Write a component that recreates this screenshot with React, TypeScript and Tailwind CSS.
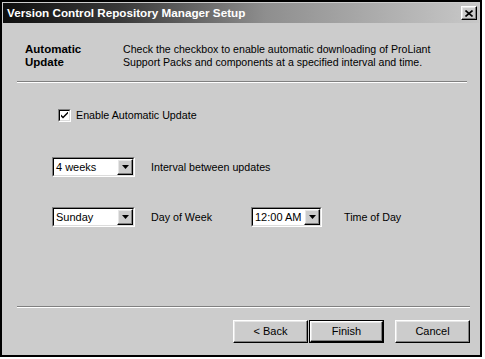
import React from 'react';

const raised =
  'border border-t-white border-l-white border-r-black border-b-black shadow-[inset_-1px_-1px_#808080,inset_1px_1px_#e6e6e6]';

function DropArrow() {
  return (
    <svg width="7" height="4" viewBox="0 0 7 4">
      <path d="M0 0h7L3.5 4z" fill="#000" />
    </svg>
  );
}

interface ComboProps {
  value: string;
  width: string;
}

function Combo({ value, width }: ComboProps) {
  return (
    <div className={`${width} h-[20px] border border-t-[#808080] border-l-[#808080] border-r-white border-b-white`}>
      <div className="h-full flex border border-t-black border-l-black border-r-[#dcdcdc] border-b-[#dcdcdc] bg-white">
        <span className="flex-1 pl-[2px] leading-[16px] text-[11px] text-black">{value}</span>
        <div className={`w-[16px] h-full bg-[#cccccc] flex items-center justify-center ${raised}`}>
          <DropArrow />
        </div>
      </div>
    </div>
  );
}

function Button({ label, isDefault }: { label: string; isDefault?: boolean }) {
  if (isDefault) {
    return (
      <div className="w-[75px] h-[23px] border border-black">
        <div className={`h-full flex items-center justify-center text-[11px] ${raised}`}>{label}</div>
      </div>
    );
  }
  return (
    <div className={`w-[75px] h-[23px] flex items-center justify-center text-[11px] ${raised}`}>{label}</div>
  );
}

function Separator({ className }: { className: string }) {
  return (
    <div className={className}>
      <div className="h-px bg-[#808080]" />
      <div className="h-px bg-white" />
    </div>
  );
}

export default function App() {
  return (
    <div className="w-[485px] h-[359px] bg-white font-['Liberation_Sans',Arial,sans-serif] text-black">
      <div className="w-[482px] h-[357px] border-2 border-black bg-[#cccccc] p-px flex flex-col">
        {/* Title bar */}
        <div className="h-[20px] flex items-center justify-between pl-[4px] pr-[2px] bg-[linear-gradient(to_right,#0e0e0e,#3a3a3a_25%,#8e8e8e_55%,#c8c8c8)]">
          <span className="text-white font-bold text-[11.7px] leading-none">
            Version Control Repository Manager Setup
          </span>
          <div className={`w-[16px] h-[14px] bg-[#cccccc] flex items-center justify-center ${raised}`}>
            <svg width="8" height="7" viewBox="0 0 8 7">
              <path d="M0.5 0.5L7.5 6.5M7.5 0.5L0.5 6.5" stroke="#000" strokeWidth="1.6" />
            </svg>
          </div>
        </div>

        {/* Body */}
        <div className="flex-1 flex flex-col">
          <div className="flex pt-[20px] pl-[22px] leading-[13px]">
            <div className="w-[98px] font-bold text-[11.5px]">
              Automatic
              <br />
              Update
            </div>
            <div className="text-[10.6px]">
              Check the checkbox to enable automatic downloading of ProLiant
              <br />
              Support Packs and components at a specified interval and time.
            </div>
          </div>

          <Separator className="mt-[12px] ml-[14px] mr-[12px]" />

          <div className="flex items-center mt-[24px] ml-[55px] gap-[5px] text-[10.7px]">
            <div className="w-[13px] h-[13px] border border-t-[#808080] border-l-[#808080] border-r-white border-b-white">
              <div className="w-full h-full bg-white border border-t-black border-l-black border-r-[#dcdcdc] border-b-[#dcdcdc] flex items-center justify-center">
                <svg width="7" height="7" viewBox="0 0 7 7">
                  <path d="M0 2.5v2l2 2l5-5v-2l-5 5z" fill="#000" />
                </svg>
              </div>
            </div>
            <span>Enable Automatic Update</span>
          </div>

          <div className="flex items-center mt-[34px] ml-[49px] text-[10.7px]">
            <Combo value="4 weeks" width="w-[83px]" />
            <span className="ml-[16px]">Interval between updates</span>
          </div>

          <div className="flex items-center mt-[30px] ml-[49px] text-[10.7px]">
            <Combo value="Sunday" width="w-[83px]" />
            <span className="ml-[16px] w-[100px]">Day of Week</span>
            <Combo value="12:00 AM" width="w-[71px]" />
            <span className="ml-[22px]">Time of Day</span>
          </div>

          <div className="flex-1" />

          <Separator className="ml-[14px] mr-[9px]" />

          <div className="flex justify-end mt-[12px] mb-[11px] mr-[9px]">
            <Button label="< Back" />
            <div className="ml-px">
              <Button label="Finish" isDefault />
            </div>
            <div className="ml-[11px]">
              <Button label="Cancel" />
            </div>
          </div>
        </div>
      </div>
    </div>
  );
}
